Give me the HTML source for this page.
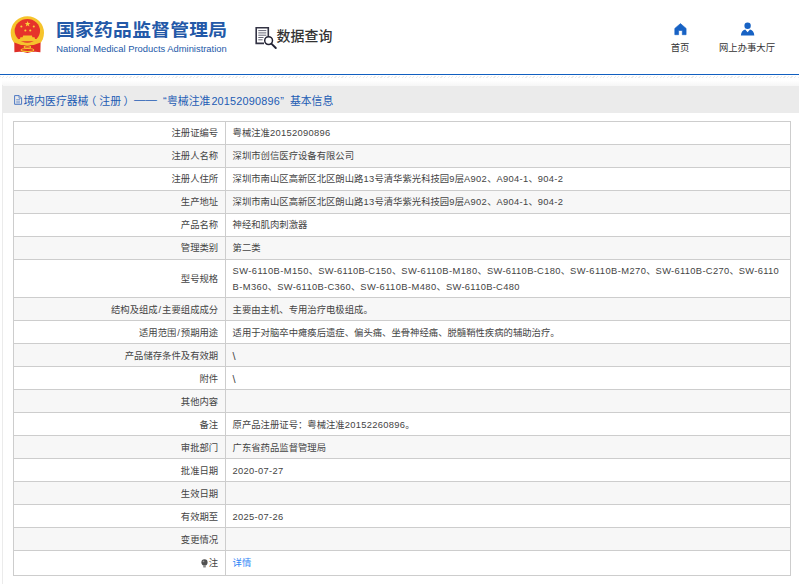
<!DOCTYPE html>
<html>
<head>
<meta charset="utf-8">
<title>国家药品监督管理局 数据查询</title>
<style>
html,body{margin:0;padding:0;background:#fff;}
body{width:799px;height:584px;overflow:hidden;position:relative;font-family:"Liberation Sans","Noto Sans CJK SC",sans-serif;color:#333;}
.abs{position:absolute;white-space:nowrap;}
#title{left:56px;top:16.2px;font-size:18.8px;line-height:27px;font-weight:bold;color:#2359a8;letter-spacing:.26px;transform:scaleY(.925);transform-origin:0 22px;}
#sub{left:56.3px;top:42.5px;font-size:9.4px;line-height:12px;color:#2359a8;}
#dq{left:276.6px;top:26.1px;font-size:13.95px;line-height:20px;color:#333;font-weight:500;}
.nav{font-size:9.36px;line-height:12px;color:#333;text-align:center;}
#blue{left:0;top:73.7px;width:799px;height:1.5px;background:#115fc0;}
#hatch{left:0;top:75.5px;width:799px;height:2.5px;background:repeating-linear-gradient(135deg,#e4e4e4 0,#e4e4e4 .9px,#fff .9px,#fff 2.5px);opacity:.7;}
#fade{left:2px;top:80px;width:797px;height:6px;background:linear-gradient(#fff,#f6f6f6);}
#lborder{left:1.6px;top:85px;width:1.1px;height:499px;background:#ebebeb;}
#bar{left:2px;top:86px;width:797px;height:26.6px;background:#ebebeb;}
#bartext{left:0;top:92.5px;font-size:10.85px;line-height:16px;color:#1c5bb4;width:400px;height:16px;}
#bartext span{position:absolute;top:0;white-space:nowrap;}
#b1{left:23.4px;}#b2{left:134px;font-size:11.4px;top:-1.8px !important;}
#bartext i{font-style:normal;position:relative;}#b3{left:163px;}#b4{left:167px;}#b5{left:211.4px;letter-spacing:.2px;}#b6{left:280.2px;}#b7{left:289.9px;}
#tbl{position:absolute;left:13px;top:121px;width:776px;border:1px solid #cdcdcd;border-bottom:none;}
.r{display:flex;height:22px;border-bottom:1px solid #cdcdcd;font-size:9.36px;line-height:15.6px;color:#444;background:#fff;box-sizing:content-box;}
.r.g{background:#f7f7f7;}
.r .l{width:204.2px;padding-right:7.0px;padding-top:2.4px;border-right:1px solid #cdcdcd;text-align:right;display:flex;align-items:center;justify-content:flex-end;box-sizing:content-box;}
.r .v{flex:1;padding-left:6.4px;padding-right:6px;padding-top:2.4px;display:flex;align-items:center;}
.r .v .t{display:block;}
.e{letter-spacing:.31px;}
.sl{margin:0 .9px;}
.e.m{letter-spacing:.415px;}
.e.c{letter-spacing:.31px;}
a{color:#2f86f6;text-decoration:none;}
</style>
</head>
<body>
<!-- emblem -->
<svg class="abs" style="left:8px;top:14px" width="40" height="42" viewBox="0 0 40 42">
  <circle cx="19.35" cy="18.85" r="16.65" fill="#f6c42c"/>
  <ellipse cx="19.35" cy="16.8" rx="12.7" ry="11.9" fill="#e6332b"/>
  <polygon points="19.6,6.9 20.35,9.0 22.5,9.0 20.8,10.3 21.4,12.4 19.6,11.15 17.8,12.4 18.4,10.3 16.7,9.0 18.85,9.0" fill="#f9d03a"/>
  <circle cx="13.35" cy="12.5" r="1.05" fill="#f9d03a"/>
  <circle cx="25.8" cy="12.5" r="1.05" fill="#f9d03a"/>
  <circle cx="17.35" cy="16.5" r="1.05" fill="#f9d03a"/>
  <circle cx="22.25" cy="16.5" r="1.05" fill="#f9d03a"/>
  <path d="M15.2 21.4 L23.9 21.4 L24.4 23.3 L26.6 23.3 L27 24.9 L28.8 24.9 L28.8 27.2 L10.2 27.2 L10.2 24.9 L12 24.9 L12.4 23.3 L14.6 23.3 Z" fill="#f6c42c"/>
  <path d="M6.3 28.6 Q12 31.6 19.4 31.3 Q26.8 31.6 32.6 28.6 L32.4 38.2 Q25.5 37 19.4 38.9 Q13 37 6.4 38.2 Z" fill="#df2e27"/>
  <ellipse cx="19.4" cy="32.9" rx="3.2" ry="1.2" fill="none" stroke="#f6c42c" stroke-width="1.1"/>
  <ellipse cx="19.4" cy="36" rx="6.3" ry="1.5" fill="none" stroke="#f6c42c" stroke-width="1.2"/>
</svg>
<div id="title" class="abs">国家药品监督管理局</div>
<div id="sub" class="abs">National Medical Products Administration</div>

<!-- data query icon -->
<svg class="abs" style="left:254.4px;top:25.2px" width="26" height="25" viewBox="0 0 26 25">
  <path d="M14.3 11.5 V2.8 H2.2 V18.4 H10" fill="none" stroke="#333344" stroke-width="1.6"/>
  <path d="M4.3 5.6 H12.3 M4.3 7.9 H12.3 M4.3 10.2 H12.3 M4.3 12.5 H9.5 M4.3 14.8 H8.6" stroke="#555566" stroke-width="0.9"/>
  <circle cx="14.6" cy="15.6" r="3.9" fill="#fff" stroke="#222233" stroke-width="1.5"/>
  <path d="M17.6 18.8 L21.8 23" stroke="#222233" stroke-width="1.9" stroke-linecap="round"/>
</svg>
<div id="dq" class="abs">数据查询</div>

<!-- nav -->
<svg class="abs" style="left:673px;top:22px" width="15" height="14" viewBox="0 0 15 14">
  <path d="M7.45 1.6 L13.1 6.4 V12.7 H9.3 V8.5 H5.6 V12.7 H1.8 V6.4 Z" fill="#1762c4" stroke="#1762c4" stroke-width="0.6" stroke-linejoin="round"/>
</svg>
<div class="abs nav" style="left:650px;width:60px;top:41.5px">首页</div>
<svg class="abs" style="left:740px;top:22px" width="15" height="14" viewBox="0 0 15 14">
  <circle cx="7.6" cy="3.7" r="3.2" fill="#1762c4"/>
  <path d="M0.9 13.4 Q1.2 8.6 5.2 7.6 L7.6 10.2 L10 7.6 Q14 8.6 14.3 13.4 Z" fill="#1762c4"/>
</svg>
<div class="abs nav" style="left:707px;width:80px;top:41.5px">网上办事大厅</div>

<div id="blue" class="abs"></div>
<div id="hatch" class="abs"></div>
<div id="fade" class="abs"></div>
<div id="lborder" class="abs"></div>
<div id="bar" class="abs"></div>
<svg class="abs" style="left:13px;top:94px" width="10" height="12" viewBox="0 0 10 12">
  <path d="M1.6 1.6 H6.2 L8.6 4 V10.3 H1.6 Z" fill="none" stroke="#3c6cc0" stroke-width="0.9"/>
  <path d="M6 1.8 V4.2 H8.4" fill="none" stroke="#3c6cc0" stroke-width="0.7"/>
  <path d="M3.2 5.6 H7 M3.2 7.2 H7 M3.2 8.8 H7" stroke="#5a84cc" stroke-width="0.7"/>
</svg>
<div id="bartext" class="abs"><span id="b1">境内医疗器械<i style="left:-3px">（</i>注册<i style="left:2.6px">）</i></span><span id="b2">——</span><span id="b3">“</span><span id="b4">粤械注准</span><span id="b5">20152090896</span><span id="b6">”</span><span id="b7">基本信息</span></div>

<div id="tbl">
  <div class="r"><div class="l">注册证编号</div><div class="v"><div class="t">粤械注准<span class="e">20152090896</span></div></div></div>
  <div class="r g"><div class="l">注册人名称</div><div class="v"><div class="t">深圳市创信医疗设备有限公司</div></div></div>
  <div class="r"><div class="l">注册人住所</div><div class="v"><div class="t">深圳市南山区高新区北区朗山路<span class="e">13</span>号清华紫光科技园<span class="e">9</span>层<span class="e">A902</span>、<span class="e">A904-1</span>、<span class="e">904-2</span></div></div></div>
  <div class="r g"><div class="l">生产地址</div><div class="v"><div class="t">深圳市南山区高新区北区朗山路<span class="e">13</span>号清华紫光科技园<span class="e">9</span>层<span class="e">A902</span>、<span class="e">A904-1</span>、<span class="e">904-2</span></div></div></div>
  <div class="r"><div class="l">产品名称</div><div class="v"><div class="t">神经和肌肉刺激器</div></div></div>
  <div class="r g"><div class="l">管理类别</div><div class="v"><div class="t">第二类</div></div></div>
  <div class="r" style="height:37.3px"><div class="l">型号规格</div><div class="v"><div class="t"><span class="e m">SW-6110B-M150</span>、<span class="e c">SW-6110B-C150</span>、<span class="e m">SW-6110B-M180</span>、<span class="e c">SW-6110B-C180</span>、<span class="e m">SW-6110B-M270</span>、<span class="e c">SW-6110B-C270</span>、<span class="e">SW-6110</span><br><span class="e m">B-M360</span>、<span class="e c">SW-6110B-C360</span>、<span class="e m">SW-6110B-M480</span>、<span class="e c">SW-6110B-C480</span></div></div></div>
  <div class="r g"><div class="l">结构及组成<span class="sl">/</span>主要组成成分</div><div class="v"><div class="t">主要由主机、专用治疗电极组成。</div></div></div>
  <div class="r"><div class="l">适用范围<span class="sl">/</span>预期用途</div><div class="v"><div class="t">适用于对脑卒中瘫痪后遗症、偏头痛、坐骨神经痛、脱髓鞘性疾病的辅助治疗。</div></div></div>
  <div class="r g"><div class="l">产品储存条件及有效期</div><div class="v"><div class="t" style="font-size:11px">\</div></div></div>
  <div class="r"><div class="l">附件</div><div class="v"><div class="t" style="font-size:11px">\</div></div></div>
  <div class="r g"><div class="l">其他内容</div><div class="v"><div class="t"></div></div></div>
  <div class="r"><div class="l">备注</div><div class="v"><div class="t">原产品注册证号：粤械注准<span class="e">20152260896</span>。</div></div></div>
  <div class="r g"><div class="l">审批部门</div><div class="v"><div class="t">广东省药品监督管理局</div></div></div>
  <div class="r"><div class="l">批准日期</div><div class="v"><div class="t"><span class="e">2020-07-27</span></div></div></div>
  <div class="r g"><div class="l">生效日期</div><div class="v"><div class="t"></div></div></div>
  <div class="r"><div class="l">有效期至</div><div class="v"><div class="t"><span class="e">2025-07-26</span></div></div></div>
  <div class="r g"><div class="l">变更情况</div><div class="v"><div class="t"></div></div></div>
  <div class="r" style="height:23.5px"><div class="l"><svg width="7" height="9" viewBox="0 0 7 9" style="margin-right:1.2px;position:relative;top:-1.1px"><circle cx="3.5" cy="3.4" r="3.1" fill="#505050"/><circle cx="2.5" cy="2.3" r="0.9" fill="#999"/><rect x="2.2" y="6.3" width="2.6" height="2.2" rx=".6" fill="#8a8a8a"/></svg>注</div><div class="v"><div class="t"><a>详情</a></div></div></div>
</div>
</body>
</html>
